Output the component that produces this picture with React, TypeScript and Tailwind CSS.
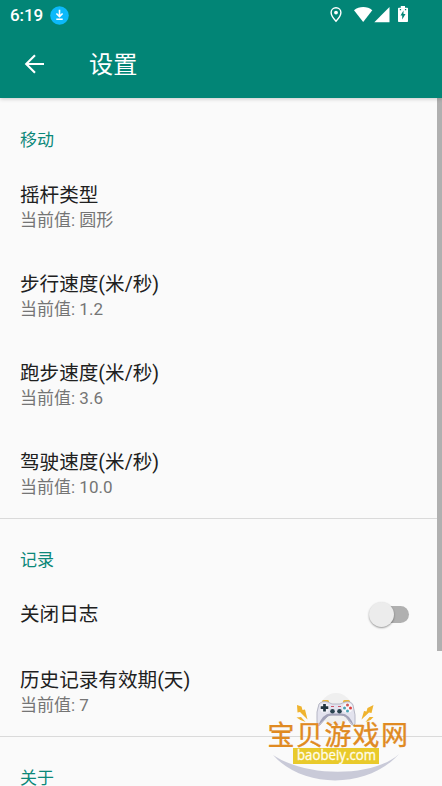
import React from "react";

function StatusBar() {
  return (
    <div className="flex h-[30px] items-center justify-between pl-[10px] pr-[33px]">
      <div className="flex items-center gap-[7px]">
        <span className="text-[17px] font-medium leading-[30px] tracking-[-0.1px]">6:19</span>
        <svg width="19" height="19" viewBox="0 0 19 19">
          <circle cx="9.5" cy="9.5" r="9.3" fill="#0cb9fa" />
          <path d="M9.5 3.800v6.500M6.400 7.500l3.100 3.100L12.600 7.500M6.300 13.200h6.400" fill="none" stroke="#fff" strokeWidth="1.600" />
        </svg>
      </div>
      <svg width="80" height="20" viewBox="329 5 80 20">
        <path
          d="M336 7.700c-2.900 0-4.900 2.200-4.900 4.900 0 3.500 4.900 8.700 4.900 8.700s4.900-5.200 4.900-8.700c0-2.700-2-4.900-4.900-4.900z"
          fill="none" stroke="#fff" strokeWidth="1.400"
        />
        <circle cx="336" cy="12.600" r="1.900" fill="#fff" />
        <path d="M354 10.200C359 6 367.500 6 372.300 10.200L363.200 22z" fill="#fff" />
        <path d="M389.500 7v15.200h-15.200z" fill="#fff" />
        <path d="M400.800 6h4.200v1.700h2.200q.8 0 .8.800v12.700q0 .8-.8.800h-8.400q-.8 0-.8-.8V8.500q0-.8.800-.8h2z" fill="#fff" />
        <path d="M399.800 9h1.300v1.300h-1.300zM404.900 9h1.300v1.300h-1.300zM403.500 10.500l-3 5h1.700v4l3.300-5.500h-2z" fill="#028576" />
      </svg>
    </div>
  );
}

function Category({ label, className = "" }: { label: string; className?: string }) {
  return (
    <div className={`px-5 text-[17px] leading-[25px] text-[#0b8879] ${className}`}>{label}</div>
  );
}

function Preference({ title, value }: { title: string; value: string }) {
  return (
    <div className="flex h-[89.250px] flex-col justify-center px-5">
      <div className="text-[19.600px] leading-[27px] text-[#202020]">{title}</div>
      <div className="text-[17px] leading-[23px] text-[#757575]">当前值: {value}</div>
    </div>
  );
}

function SiteLogo() {
  return (
    <svg className="absolute left-[255px] top-[680px]" width="187" height="106" viewBox="0 0 187 106">
      <circle cx="81" cy="29" r="16" fill="#efefef" />
      <path d="M18 75C48 109 113 109 144 74C119 97 52 98 18 75z" fill="#c9cad8" />
      <path d="M67 22.500v-1q0-1.500 1.500-1.500h4q1.500 0 1.500 1.500v1zM88 22.500v-1q0-1.500 1.500-1.500h4q1.500 0 1.500 1.500v1z" fill="#e9b73c" />
      <path
        d="M64 24Q67 20.500 73 22L77 24H85L90 22Q96 20.500 98 25Q101 35 100 44Q99 47 96 44L91 37Q89 35 86 35H76Q73 35 71 38L65 45Q62 47 62 42Q61 31 64 24z"
        fill="#e3e3ee" stroke="#aaabba" strokeWidth=".8"
      />
      <path d="M63 46Q68 33 76 33.500H86Q94 33 99 46L91 37Q89 35.500 86 35.500H76Q73 35.500 71 38z" fill="#a2a2b8" />
      <circle cx="69.500" cy="28" r="4.800" fill="#f1f1f7" />
      <path d="M69.500 24v7.500M65.700 27.700h7.600" stroke="#20343f" strokeWidth="2.700" />
      <circle cx="92.500" cy="28" r="5.100" fill="#f7f7fb" />
      <circle cx="92.500" cy="25" r="1.500" fill="#ce5555" />
      <circle cx="92.500" cy="31" r="1.500" fill="#4aa2b4" />
      <circle cx="89.500" cy="28" r="1.500" fill="#4aa2b4" />
      <circle cx="95.500" cy="28" r="1.500" fill="#dc4141" />
      <path d="M76 26.500h3M83 26.500h3" stroke="#cf586d" strokeWidth="1.200" />
      <circle cx="77.500" cy="31.300" r="2.300" fill="#29434f" />
      <circle cx="84.500" cy="31.300" r="2.300" fill="#29434f" />
      <path
        d="M42 25l4.500 1.500 1 3.500 2.500-.5 2.500 10-7.500-7.500-2.500.5zM118.500 25l-6 3-1 3.500-2.500-.5-2.500 8.500 7.500-7 2.500.5zM41.500 37.500l4.500-.5 4.500 5-5-2zM118.500 37l-4 0-4 5 5-2z"
        fill="#efb32e"
      />
      <text
        y="64.500" x="12.500 41 69.500 97.500 126" fill="#e08a22" stroke="#e08a22" strokeWidth=".35"
        className="font-['Noto_Sans_CJK_SC',sans-serif] text-[27px] font-normal"
      >
        宝贝游戏网
      </text>
      <rect x="38" y="68" width="86" height="16" fill="#e9ca2b" />
      <text
        x="42" y="80" fill="#fffdeb" stroke="#fffdeb" strokeWidth=".3" textLength="79" lengthAdjust="spacingAndGlyphs"
        className="font-['Open_Sans','Noto_Sans',sans-serif] text-[14px] font-medium"
      >
        baobeiy.com
      </text>
    </svg>
  );
}

export default function App() {
  return (
    <div className="relative h-[786px] w-[442px] overflow-hidden bg-[#fafafa] font-[Roboto,'Noto_Sans_CJK_SC',sans-serif]">
      <header className="relative h-[98px] bg-[#028576] text-white shadow-[0_1px_4px_rgba(0,0,0,0.2)]">
        <StatusBar />
        <div className="flex h-[68px] items-center pl-[24px]">
          <svg width="21" height="20" viewBox="0 0 21 20" fill="none" stroke="#fff" strokeWidth="2.100">
            <path d="M20 10H2.500M11 1.200L2.200 10l8.800 8.800" />
          </svg>
          <h1 className="ml-[44px] pt-[2px] text-[24.200px] leading-[36px]">设置</h1>
        </div>
      </header>
      <main className="flex">
        <div className="w-[437px] shrink-0">
          <section className="h-[420px]">
            <Category label="移动" className="pb-[9px] pt-[30px]" />
            <Preference title="摇杆类型" value="圆形" />
            <Preference title="步行速度(米/秒)" value="1.2" />
            <Preference title="跑步速度(米/秒)" value="3.6" />
            <Preference title="驾驶速度(米/秒)" value="10.0" />
          </section>
          <section className="h-[218px] w-[442px] border-t border-[#dadada]">
            <Category label="记录" className="pb-[8.500px] pt-[29px]" />
            <div className="flex h-[66px] items-center justify-between pl-5 pr-[33px]">
              <span className="text-[19.600px] leading-[27px] text-[#202020]">关闭日志</span>
              <div className="flex h-[17px] w-[34px] items-center rounded-full bg-[#b0b0b0]">
                <span className="-ml-[6px] size-[25px] shrink-0 rounded-full bg-[#ececec] shadow-[0_1px_2px_rgba(0,0,0,0.4)]" />
              </div>
            </div>
            <Preference title="历史记录有效期(天)" value="7" />
          </section>
          <section className="w-[442px] border-t border-[#dadada]">
            <Category label="关于" className="pt-[29px]" />
          </section>
        </div>
        <div className="h-[553px] w-[5px] shrink-0 bg-[#b0b0b0]" />
      </main>
      <SiteLogo />
    </div>
  );
}
